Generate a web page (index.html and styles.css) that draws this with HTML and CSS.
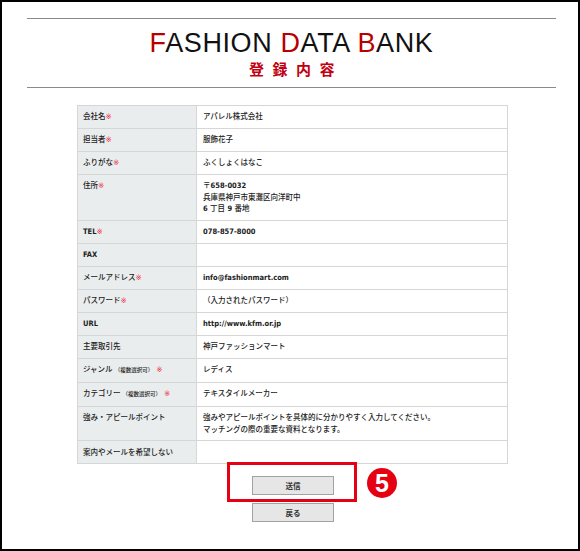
FILE: index.html
```html
<!DOCTYPE html>
<html lang="ja">
<head>
<meta charset="utf-8">
<title>登録内容</title>
<link rel="stylesheet" href="styles.css">
</head>
<body>
<div class="frame">
  <header class="header">
    <h1 class="title"><span class="accent">F</span>ASHION <span class="accent">D</span>ATA <span class="accent">B</span>ANK</h1>
    <p class="subtitle">登録内容</p>
  </header>

  <table class="form">
    <tr><th>会社名<span class="req">※</span></th><td>アパレル株式会社</td></tr>
    <tr><th>担当者<span class="req">※</span></th><td>服飾花子</td></tr>
    <tr><th>ふりがな<span class="req">※</span></th><td>ふくしょくはなこ</td></tr>
    <tr><th>住所<span class="req">※</span></th><td>〒<span class="latin">658-0032</span><br>兵庫県神戸市東灘区向洋町中<br><span class="latin">6</span> 丁目 <span class="latin">9</span> 番地</td></tr>
    <tr><th><span class="latin">TEL</span><span class="req">※</span></th><td><span class="latin">078-857-8000</span></td></tr>
    <tr><th><span class="latin">FAX</span></th><td></td></tr>
    <tr><th>メールアドレス<span class="req">※</span></th><td><span class="latin">info@fashionmart.com</span></td></tr>
    <tr><th>パスワード<span class="req">※</span></th><td>（入力されたパスワード）</td></tr>
    <tr><th><span class="latin">URL</span></th><td><span class="latin">http://www.kfm.or.jp</span></td></tr>
    <tr><th>主要取引先</th><td>神戸ファッションマート</td></tr>
    <tr><th>ジャンル<span class="note">（複数選択可）</span><span class="req">※</span></th><td>レディス</td></tr>
    <tr><th>カテゴリー<span class="note">（複数選択可）</span><span class="req">※</span></th><td>テキスタイルメーカー</td></tr>
    <tr><th>強み・アピールポイント</th><td>強みやアピールポイントを具体的に分かりやすく入力してください。<br>マッチングの際の重要な資料となります。</td></tr>
    <tr><th>案内やメールを希望しない</th><td></td></tr>
  </table>

  <div class="actions">
    <button class="btn" type="button">送信</button>
    <button class="btn" type="button">戻る</button>
  </div>

  <div class="highlight"></div>
  <div class="step">5</div>
</div>
</body>
</html>
```

FILE: styles.css
```css
html, body {
  margin: 0;
  padding: 0;
  background: #fff;
}

.frame {
  position: relative;
  box-sizing: border-box;
  width: 580px;
  height: 551px;
  border: 2px solid #000;
  overflow: hidden;
  font-family: "DejaVu Sans", "Noto Sans CJK JP", sans-serif;
  color: #222;
}

.header {
  margin: 16px 22px 0 25px;
  border-top: 1px solid #8a8a8a;
  border-bottom: 1px solid #8a8a8a;
  padding: 11px 0 11px;
  text-align: center;
}

.title {
  margin: 0;
  font-family: "Liberation Sans", Arial, sans-serif;
  font-weight: normal;
  font-size: 27px;
  line-height: 27px;
  letter-spacing: 0.6px;
  color: #111;
}

.accent {
  color: #b80000;
}

.subtitle {
  margin: 4px 0 0;
  padding-left: 9px;
  font-family: "Noto Sans CJK JP", sans-serif;
  font-weight: bold;
  font-size: 15px;
  line-height: 15px;
  letter-spacing: 8.5px;
  color: #c20010;
}

.form {
  margin: 17px 0 0 75px;
  width: 431px;
  border-collapse: collapse;
  font-size: 7.5px;
  line-height: 11.6px;
}

.form th,
.form td {
  border: 1px solid #d6d6d6;
  padding: 5.2px 6px;
  text-align: left;
  vertical-align: top;
  font-weight: 500;
}

.form th {
  width: 107px;
  padding-left: 5px;
  background: #eaeded;
  white-space: nowrap;
}

.latin {
  font-weight: bold;
  font-stretch: condensed;
}

.req {
  color: #f0243c;
}

.note {
  font-size: 5.5px;
  margin-left: 2px;
  margin-right: 3px;
}

.actions {
  display: flex;
  flex-direction: column;
  align-items: flex-start;
  gap: 8px;
  margin: 12px 0 0 250px;
}

.btn {
  box-sizing: border-box;
  width: 82px;
  height: 19px;
  margin: 0;
  padding: 0;
  border: 1px solid #a3a3a3;
  background: #e6e6e6;
  font-family: "Noto Sans CJK JP", sans-serif;
  font-weight: bold;
  font-size: 7.5px;
  color: #333;
}

.highlight {
  position: absolute;
  left: 225px;
  top: 460px;
  width: 124px;
  height: 34px;
  border: 3px solid #e50012;
}

.step {
  position: absolute;
  left: 365px;
  top: 466px;
  width: 30px;
  height: 30px;
  border-radius: 50%;
  background: #e50012;
  color: #fff;
  font-family: "Liberation Sans", Arial, sans-serif;
  font-weight: bold;
  font-size: 25px;
  line-height: 30px;
  text-align: center;
}
```
